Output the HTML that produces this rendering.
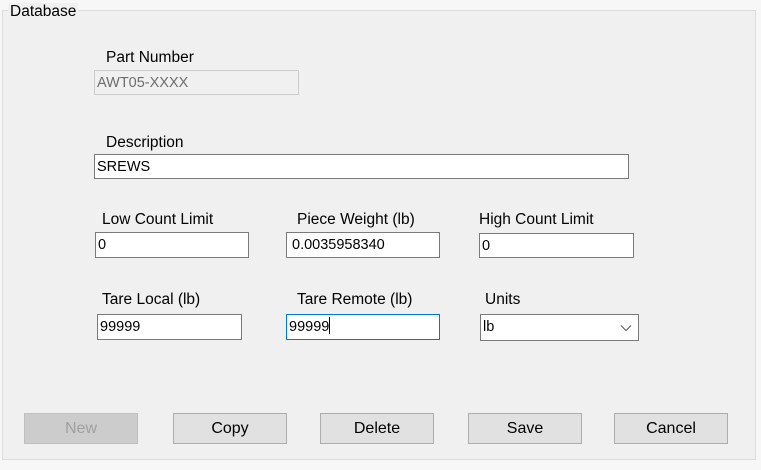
<!DOCTYPE html>
<html><head><style>
body{margin:0;width:761px;height:470px;background:#f7f7f7;position:relative;overflow:hidden;font-family:"Liberation Sans",sans-serif;}
.gb{position:absolute;left:2px;top:10px;width:754px;height:450px;background:#f0f0f0;border:1px solid #dcdcdc;box-sizing:border-box;}
.leg{position:absolute;left:8px;top:3px;font-size:15.5px;color:#000;background:#f0f0f0;padding:0 2px;}
.l{position:absolute;font-size:15.5px;color:#000;white-space:nowrap;}
.f{position:absolute;background:#fff;border:1px solid #7a7a7a;box-sizing:border-box;font-size:14.5px;line-height:24px;padding-left:2px;color:#000;white-space:nowrap;}
.b{position:absolute;top:413px;height:31px;width:114px;background:#e1e1e1;border:1px solid #adadad;box-sizing:border-box;font-size:16px;text-align:center;line-height:30px;color:#000;}
</style></head><body>
<div class="gb"></div>
<div class="leg">Database</div>
<div class="l" style="left:106px;top:49px">Part Number</div>
<div class="f" style="left:94px;top:70px;width:205px;height:25px;background:#f0f0f0;border-color:#cccccc;color:#6d6d6d">AWT05-XXXX</div>
<div class="l" style="left:106px;top:134px">Description</div>
<div class="f" style="left:94px;top:154px;width:535px;height:25px">SREWS</div>
<div class="l" style="left:102px;top:211px">Low Count Limit</div>
<div class="f" style="left:95px;top:232px;width:154px;height:26px">0</div>
<div class="l" style="left:297px;top:211px">Piece Weight (lb)</div>
<div class="f" style="left:286px;top:232px;width:154px;height:26px;padding-left:5px">0.0035958340</div>
<div class="l" style="left:479px;top:211px">High Count Limit</div>
<div class="f" style="left:479px;top:233px;width:155px;height:25px">0</div>
<div class="l" style="left:102px;top:291px">Tare Local (lb)</div>
<div class="f" style="left:97px;top:314px;width:145px;height:26px">99999</div>
<div class="l" style="left:297px;top:291px">Tare Remote (lb)</div>
<div class="f" style="left:286px;top:314px;width:154px;height:26px;border-color:#0078d7">99999<span style="display:inline-block;width:1px;height:17px;background:#000;vertical-align:middle;margin-top:-3px"></span></div>
<div class="l" style="left:485px;top:291px">Units</div>
<div class="f" style="left:480px;top:314px;width:159px;height:27px;line-height:25px">lb<svg style="position:absolute;right:6px;top:9px" width="12" height="8" viewBox="0 0 12 8"><path d="M1 1.5L6 6.5L11 1.5" fill="none" stroke="#666" stroke-width="1.2"/></svg></div>
<div class="b" style="left:24px;background:#cccccc;border-color:#bfbfbf;color:#a0a0a0">New</div>
<div class="b" style="left:173px">Copy</div>
<div class="b" style="left:320px">Delete</div>
<div class="b" style="left:468px">Save</div>
<div class="b" style="left:614px">Cancel</div>
</body></html>
